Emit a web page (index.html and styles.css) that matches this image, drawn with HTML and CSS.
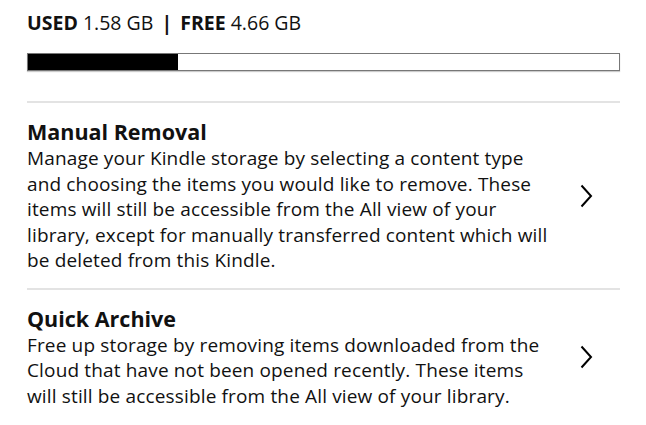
FILE: index.html
```html
<!DOCTYPE html>
<html lang="en">
<head>
    <meta charset="UTF-8">
    <meta name="viewport" content="width=device-width, initial-scale=1.0">
    <title>Storage Management</title>
    <link rel="stylesheet" href="styles.css">
</head>
<body>
    <div class="container">
        <div class="usage">
            <b>USED</b> 1.58 GB <b class="sep">|</b> <b>FREE</b> 4.66 GB
        </div>
        <div class="bar">
            <div class="bar-fill" style="width: 25.3%;"></div>
        </div>

        <div class="option">
            <div class="option-text">
                <h2>Manual Removal</h2>
                <p>Manage your Kindle storage by selecting a content type and choosing the items you would like to remove. These items will still be accessible from the All view of your library, except for manually transferred content which will be deleted from this Kindle.</p>
            </div>
            <svg class="chevron" width="14" height="24" viewBox="0 0 14 24">
                <path d="M2.5 1.5 L12 12 L2.5 22.5" fill="none" stroke="#000" stroke-width="2"/>
            </svg>
        </div>

        <div class="option">
            <div class="option-text">
                <h2>Quick Archive</h2>
                <p>Free up storage by removing items downloaded from the Cloud that have not been opened recently. These items will still be accessible from the All view of your library.</p>
            </div>
            <svg class="chevron" width="14" height="24" viewBox="0 0 14 24">
                <path d="M2.5 1.5 L12 12 L2.5 22.5" fill="none" stroke="#000" stroke-width="2"/>
            </svg>
        </div>
    </div>
</body>
</html>
```

FILE: styles.css
```css
body {
    font-family: "Open Sans", "Noto Sans", sans-serif;
    margin: 0;
    padding: 0;
    background-color: #fff;
    color: #111;
}

.container {
    width: 593px;
    padding: 10px 0 0 27px;
}

.usage {
    font-size: 19.5px;
    line-height: 26px;
}

.usage b {
    font-weight: 700;
}

.usage .sep {
    margin: 0 3px;
}

.bar {
    margin-top: 17px;
    height: 16px;
    border: 1px solid #777;
    box-shadow: 0 1px 1px #ccc;
}

.bar-fill {
    height: 100%;
    background-color: #000;
}

.option {
    display: flex;
    align-items: center;
    border-top: 2px solid #e3e3e3;
    margin-top: 30px;
    padding-top: 15px;
}

.option + .option {
    margin-top: 14px;
}

.option-text {
    flex: 1;
    padding-right: 22px;
}

h2 {
    margin: 0;
    font-size: 21.5px;
    line-height: 28px;
    font-weight: 700;
}

p {
    margin: 0;
    font-size: 19px;
    line-height: 25.5px;
    letter-spacing: 0.15px;
}

.chevron {
    margin-right: 27px;
}
```
